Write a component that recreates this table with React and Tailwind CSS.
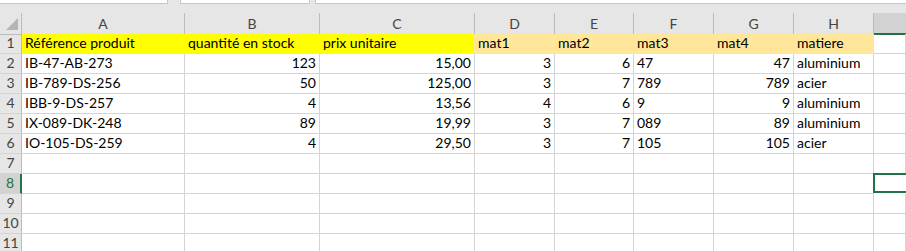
import React from 'react';

const COLS = ['A', 'B', 'C', 'D', 'E', 'F', 'G', 'H', 'I'];

// widths of the lettered columns, I takes what is left
const gridCols = 'grid-cols-[22px_163px_135px_155px_80px_79px_80px_80px_80px_1fr]';

const headerRow = [
  { v: 'Référence produit', fill: 'bg-[#ffff00] border-[#ffff00]' },
  { v: 'quantité en stock', fill: 'bg-[#ffff00] border-[#ffff00]' },
  { v: 'prix unitaire', fill: 'bg-[#ffff00] border-[#ffe699]' },
  { v: 'mat1', fill: 'bg-[#ffe699] border-[#ffe699]' },
  { v: 'mat2', fill: 'bg-[#ffe699] border-[#ffe699]' },
  { v: 'mat3', fill: 'bg-[#ffe699] border-[#ffe699]' },
  { v: 'mat4', fill: 'bg-[#ffe699] border-[#ffe699]' },
  { v: 'matiere', fill: 'bg-[#ffe699] border-[#ffe699]' },
];

// [ref, qty, price, mat1, mat2, mat3 (text), mat4, matiere]
const products = [
  ['IB-47-AB-273', '123', '15,00', '3', '6', '47', '47', 'aluminium'],
  ['IB-789-DS-256', '50', '125,00', '3', '7', '789', '789', 'acier'],
  ['IBB-9-DS-257', '4', '13,56', '4', '6', '9', '9', 'aluminium'],
  ['IX-089-DK-248', '89', '19,99', '3', '7', '089', '89', 'aluminium'],
  ['IO-105-DS-259', '4', '29,50', '3', '7', '105', '105', 'acier'],
];

// which columns hold numbers (right aligned)
const numeric = [false, true, true, true, true, false, true, false];

function RowHeader({ n, active }) {
  return (
    <div
      className={`h-[20px] flex items-end justify-center pb-[1px] border-b border-[#d4d4d4] text-[14px] leading-[18px] ${
        active
          ? 'bg-[#d2d2d2] text-[#217346] border-r-2 border-r-[#217346]'
          : 'bg-[#e6e6e6] text-[#444] border-r border-r-[#bcbcbc]'
      }`}
    >
      {n}
    </div>
  );
}

function Cell({ children, right, className = 'border-[#d4d4d4]' }) {
  return (
    <div
      className={`h-[20px] border-r border-b flex items-end pb-[1px] px-[3px] overflow-hidden whitespace-nowrap text-[14px] leading-[18px] text-black ${
        right ? 'justify-end' : 'justify-start'
      } ${className}`}
    >
      {children}
    </div>
  );
}

export default function App() {
  const blankRows = [7, 8, 9, 10, 11];

  return (
    <div className="w-[906px] h-[251px] overflow-hidden bg-white font-['Lato','Liberation_Sans',sans-serif]">
      {/* strip of the formula bar above the sheet */}
      <div className="h-[13px] bg-[#e6e6e6] flex items-start">
        <div className="w-[168px] h-[4px] bg-white border-b border-r border-[#c6c6c6]" />
        <div className="w-[12px]" />
        <div className="w-[130px] h-[4px] bg-white border-b border-x border-[#c6c6c6]" />
        <div className="w-[5px]" />
        <div className="flex-1 h-[4px] bg-white border-b border-l border-[#c6c6c6]" />
      </div>

      {/* column letters */}
      <div className={`grid ${gridCols} h-[21px]`}>
        <div className="relative bg-[#e6e6e6] border-r border-b border-[#bcbcbc]">
          <svg className="absolute left-[6px] top-[5px]" width="13" height="13" viewBox="0 0 13 13">
            <polygon points="0,12 12,12 12,0" fill="#b4b4b4" />
          </svg>
        </div>
        {COLS.map((c) =>
          c === 'I' ? (
            <div key={c} className="bg-[#d2d2d2] border-b-2 border-[#217346]" />
          ) : (
            <div
              key={c}
              className="bg-[#e6e6e6] border-r border-b border-[#bcbcbc] flex items-center justify-center text-[14px] text-[#444]"
            >
              {c}
            </div>
          )
        )}
      </div>

      {/* sheet body */}
      <div className={`grid ${gridCols}`}>
        <RowHeader n={1} />
        {headerRow.map((h) => (
          <Cell key={h.v} className={h.fill}>
            {h.v}
          </Cell>
        ))}
        <Cell />

        {products.map((row, i) => (
          <React.Fragment key={row[0]}>
            <RowHeader n={i + 2} />
            {row.map((v, j) => (
              <Cell key={j} right={numeric[j]}>
                {v}
              </Cell>
            ))}
            <Cell />
          </React.Fragment>
        ))}

        {blankRows.map((n) => (
          <React.Fragment key={n}>
            <RowHeader n={n} active={n === 8} />
            {COLS.map((c) =>
              n === 8 && c === 'I' ? (
                <div key={c} className="h-[20px] border-y-2 border-l-2 border-[#217346] -mt-[1px] -ml-[1px]" />
              ) : (
                <Cell key={c} />
              )
            )}
          </React.Fragment>
        ))}
      </div>
    </div>
  );
}
